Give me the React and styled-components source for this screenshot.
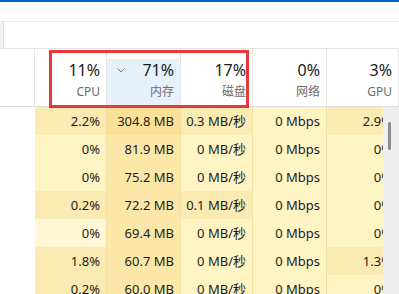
import React from "react";
import styled, { createGlobalStyle } from "styled-components";

const GlobalStyle = createGlobalStyle`
  html, body { margin: 0; padding: 0; background: #ffffff; }
  body { font-family: "Noto Sans", "Noto Sans CJK SC", sans-serif; }
  * { box-sizing: border-box; }
`;

const COLS = "35px 72px 74px 72px 74px 72px";

const HEAT = {
  z: "#fff7d6",
  0: "#fff4c4",
  1: "#f9ebb1",
  2: "#fbe8a8",
  3: "#fae197",
};

const Page = styled.div`
  position: relative;
  width: 399px;
  height: 294px;
  overflow: hidden;
  background: #ffffff;
  display: flex;
  flex-direction: column;
`;

const AccentBar = styled.div`
  height: 2px;
  background: #0067c0;
  flex: none;
`;

const Toolbar = styled.div`
  height: 20px;
  flex: none;
  border-bottom: 1px solid #e8e8e8;
  background: #ffffff;
`;

const TabStrip = styled.div`
  height: 27px;
  flex: none;
  display: flex;
  border-bottom: 1px solid #e2e2e2;
  background: #ffffff;
`;

const TabStub = styled.div`
  width: 4px;
  background: #f4f4f4;
  border-right: 1px solid #dedede;
`;

const HeaderRow = styled.div`
  display: grid;
  grid-template-columns: ${COLS};
  height: 58px;
  flex: none;
  border-bottom: 1px solid #e0e0e0;
`;

const HeaderCell = styled.div`
  display: flex;
  flex-direction: column;
  padding: 10px 6px 0 0;
  border-right: 1px solid #e5e5e5;
  background: ${(p) =>
    p.$active
      ? "linear-gradient(to bottom, #ffffff 0, #ffffff 10px, #e5f1fb 10px)"
      : "#ffffff"};
`;

const ValueLine = styled.div`
  display: flex;
  align-items: center;
  height: 22px;
`;

const Chevron = styled.svg`
  margin-left: 10px;
  flex: none;
`;

const Value = styled.span`
  margin-left: auto;
  font-size: 16px;
  line-height: 22px;
  color: #1a1a1a;
  white-space: nowrap;
`;

const Label = styled.div`
  margin-top: 3px;
  font-size: 12px;
  line-height: 16px;
  color: #6b6b6b;
  text-align: right;
  white-space: nowrap;
`;

const Body = styled.div`
  flex: 1;
  display: flex;
  min-height: 0;
`;

const Viewport = styled.div`
  flex: 1;
  overflow: hidden;
  min-width: 0;
`;

const DataRow = styled.div`
  display: grid;
  grid-template-columns: ${COLS};
  width: 399px;
  height: 28px;
`;

const NameCell = styled.div`
  background: #ffffff;
`;

const DataCell = styled.div`
  height: 28px;
  line-height: 28px;
  font-size: 13px;
  color: #1c1c1c;
  text-align: right;
  white-space: nowrap;
  overflow: hidden;
  padding-right: 6px;
  border-right: 1px solid #efe0a4;
  background: ${(p) => HEAT[p.$level]};
`;

const ScrollTrack = styled.div`
  width: 16px;
  flex: none;
  background: #efefef;
  padding-top: 15px;
`;

const ScrollThumb = styled.div`
  width: 3px;
  height: 28px;
  margin-left: 5px;
  border-radius: 2px;
  background: #8a8a8a;
`;

const Annotation = styled.div`
  position: absolute;
  left: 49px;
  top: 50px;
  width: 200px;
  height: 58px;
  border: 3px solid #e5393a;
  pointer-events: none;
`;

const headers = [
  { value: "11%", label: "CPU" },
  { value: "71%", label: "内存", active: true },
  { value: "17%", label: "磁盘" },
  { value: "0%", label: "网络" },
  { value: "3%", label: "GPU" },
];

const rows = [
  [["2.2%", 1], ["304.8 MB", 3], ["0.3 MB/秒", 1], ["0 Mbps", 0], ["2.9%", 1]],
  [["0%", 0], ["81.9 MB", 2], ["0 MB/秒", 0], ["0 Mbps", 0], ["0%", 0]],
  [["0%", 0], ["75.2 MB", 2], ["0 MB/秒", 0], ["0 Mbps", 0], ["0%", 0]],
  [["0.2%", 1], ["72.2 MB", 2], ["0.1 MB/秒", 1], ["0 Mbps", 0], ["0%", 0]],
  [["0%", "z"], ["69.4 MB", 2], ["0 MB/秒", 0], ["0 Mbps", 0], ["0%", 0]],
  [["1.8%", 1], ["60.7 MB", 2], ["0 MB/秒", 0], ["0 Mbps", 0], ["1.3%", 1]],
  [["0.2%", 1], ["60.0 MB", 2], ["0 MB/秒", 0], ["0 Mbps", 0], ["0%", 0]],
];

export default function App() {
  return (
    <>
      <GlobalStyle />
      <Page>
        <AccentBar />
        <Toolbar />
        <TabStrip>
          <TabStub />
        </TabStrip>
        <HeaderRow>
          <HeaderCell />
          {headers.map((h) => (
            <HeaderCell key={h.label} $active={h.active}>
              <ValueLine>
                {h.active && (
                  <Chevron width="8" height="5" viewBox="0 0 8 5">
                    <polyline
                      points="0.5,0.5 4,4 7.5,0.5"
                      fill="none"
                      stroke="#7a7a7a"
                      strokeWidth="1"
                    />
                  </Chevron>
                )}
                <Value>{h.value}</Value>
              </ValueLine>
              <Label>{h.label}</Label>
            </HeaderCell>
          ))}
        </HeaderRow>
        <Body>
          <Viewport>
            {rows.map((r, i) => (
              <DataRow key={i}>
                <NameCell />
                {r.map(([text, level], j) => (
                  <DataCell key={j} $level={level}>
                    {text}
                  </DataCell>
                ))}
              </DataRow>
            ))}
          </Viewport>
          <ScrollTrack>
            <ScrollThumb />
          </ScrollTrack>
        </Body>
        <Annotation />
      </Page>
    </>
  );
}
